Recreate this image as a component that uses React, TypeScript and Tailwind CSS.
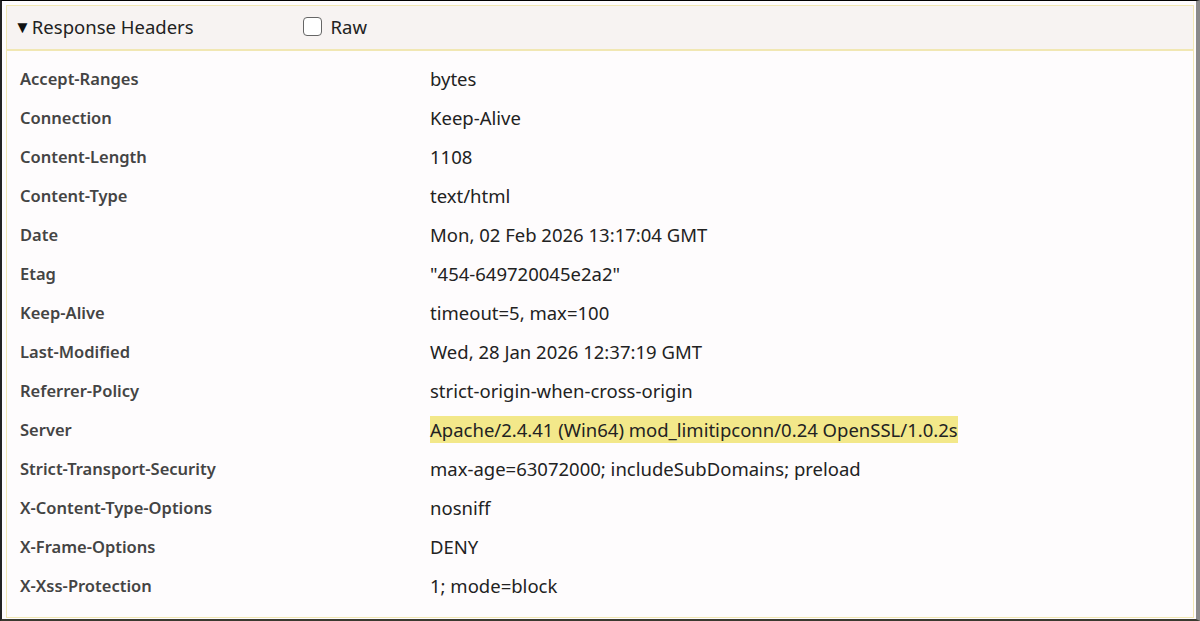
const rows: [string, string][] = [
  ["Accept-Ranges", "bytes"],
  ["Connection", "Keep-Alive"],
  ["Content-Length", "1108"],
  ["Content-Type", "text/html"],
  ["Date", "Mon, 02 Feb 2026 13:17:04 GMT"],
  ["Etag", "\"454-649720045e2a2\""],
  ["Keep-Alive", "timeout=5, max=100"],
  ["Last-Modified", "Wed, 28 Jan 2026 12:37:19 GMT"],
  ["Referrer-Policy", "strict-origin-when-cross-origin"],
  ["Server", "Apache/2.4.41 (Win64) mod_limitipconn/0.24 OpenSSL/1.0.2s"],
  ["Strict-Transport-Security", "max-age=63072000; includeSubDomains; preload"],
  ["X-Content-Type-Options", "nosniff"],
  ["X-Frame-Options", "DENY"],
  ["X-Xss-Protection", "1; mode=block"],
];

export default function App() {
  return (
    <div
      className="w-[1200px] h-[621px] bg-[#fefcfd] border-t border-t-black border-l-2 border-l-[#222] border-r-4 border-r-[#8a8a8a] border-b-2 border-b-[#3a3a30] pt-[4px] pl-[4px] pr-[2px] pb-[1px] flex flex-col"
      style={{ fontFamily: '"Noto Sans", "Open Sans", sans-serif' }}
    >
      <div className="flex-1 flex flex-col border border-[#f1e7b3]">
        {/* header bar */}
        <div className="h-[45px] pb-[2px] bg-[#f7f3f2] border-b-2 border-b-[#f1e7b3] flex items-center">
          <span className="ml-[7px] text-[17px] text-[#111] leading-none">▼</span>
          <span className="ml-[1px] text-[18.5px] text-[#222]">Response Headers</span>
          <span className="ml-[109px] w-[19px] h-[19px] rounded-[4px] border-[1.5px] border-[#666] bg-white"></span>
          <span className="ml-[9px] text-[18.5px] text-[#222]">Raw</span>
        </div>

        {/* header rows */}
        <div className="pt-[8px] flex flex-col">
          {rows.map(([k, v]) => (
            <div key={k} className="h-[39px] flex items-center">
              <div className="w-[423px] pl-[13px] pt-[2px] text-[16.5px] font-semibold text-[#444]">{k}</div>
              <div className="text-[18.5px] text-[#222]">
                {k === "Server" ? <span className="bg-[#f3e88a] py-[1px]">{v}</span> : v}
              </div>
            </div>
          ))}
        </div>
      </div>
    </div>
  );
}
